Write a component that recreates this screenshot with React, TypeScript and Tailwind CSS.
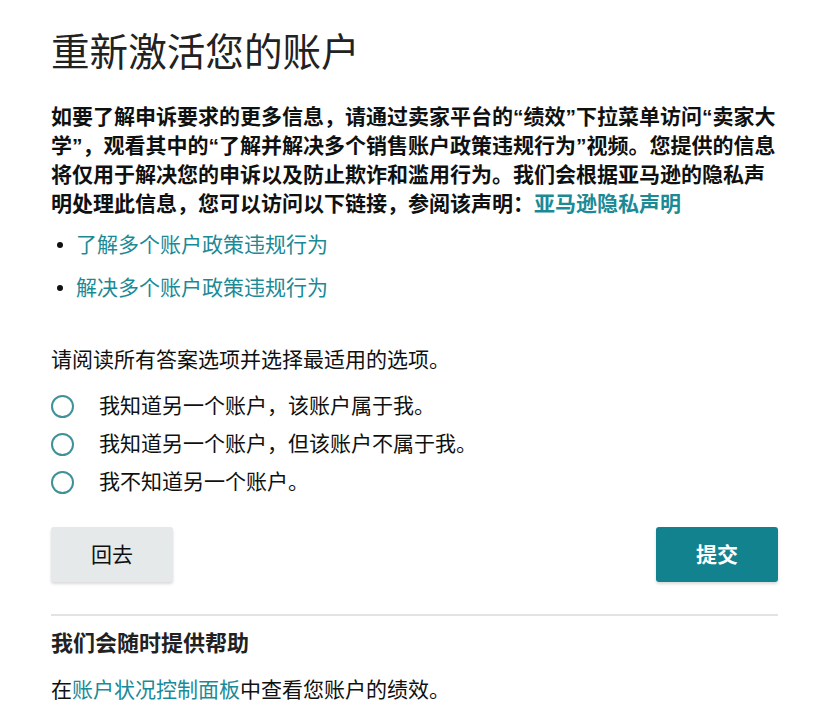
import React, { useState } from "react";

const options = [
  "我知道另一个账户，该账户属于我。",
  "我知道另一个账户，但该账户不属于我。",
  "我不知道另一个账户。",
];

export default function App() {
  const [picked, setPicked] = useState<number | null>(null);

  return (
    <div
      className="min-h-screen bg-white text-[#0f1111]"
      style={{ fontFamily: '"Liberation Sans", "Noto Sans CJK SC", sans-serif' }}
    >
      <div className="mx-[51px] w-[727px] pt-[27px]">
        <h1 className="text-[38.6px] font-normal leading-[52px] text-[#222]">
          重新激活您的账户
        </h1>

        <p className="mt-[23px] text-[21px] font-bold leading-[29px]">
          如要了解申诉要求的更多信息，请通过卖家平台的“绩效”下拉菜单访问“卖家大学”，观看其中的“了解并解决多个销售账户政策违规行为”视频。您提供的信息将仅用于解决您的申诉以及防止欺诈和滥用行为。我们会根据亚马逊的隐私声明处理此信息，您可以访问以下链接，参阅该声明：
          <a className="text-[#1b8a97]">亚马逊隐私声明</a>
        </p>

        <ul className="mt-[12px] flex flex-col gap-[14px] text-[21px] leading-[29px]">
          <li className="flex items-center">
            <span className="mr-[13px] ml-[6px] h-[6px] w-[6px] rounded-full bg-[#0f1111]" />
            <a className="text-[#1b8a97]">了解多个账户政策违规行为</a>
          </li>
          <li className="flex items-center">
            <span className="mr-[13px] ml-[6px] h-[6px] w-[6px] rounded-full bg-[#0f1111]" />
            <a className="text-[#1b8a97]">解决多个账户政策违规行为</a>
          </li>
        </ul>

        <p className="mt-[43px] text-[21px] leading-[29px]">
          请阅读所有答案选项并选择最适用的选项。
        </p>

        <div className="mt-[17px] flex flex-col gap-[8px]">
          {options.map((o, i) => (
            <label
              key={o}
              className="flex h-[30px] cursor-pointer items-center text-[21px]"
              onClick={() => setPicked(i)}
            >
              <span className="flex h-[23px] w-[23px] items-center justify-center rounded-full border-2 border-[#3f9199]">
                {picked === i ? (
                  <span className="h-[11px] w-[11px] rounded-full bg-[#3f9199]" />
                ) : null}
              </span>
              <span className="ml-[25px]">{o}</span>
            </label>
          ))}
        </div>

        <div className="mt-[30px] flex justify-between">
          <button className="h-[55px] w-[122px] rounded-[3px] bg-[#e6e9ea] text-[21px] text-[#0f1111] shadow-[0_2px_3px_rgba(0,0,0,0.15)]">
            回去
          </button>
          <button className="h-[55px] w-[122px] rounded-[3px] bg-[#12828f] text-[21px] font-bold text-white shadow-[0_2px_3px_rgba(0,0,0,0.15)]">
            提交
          </button>
        </div>

        <div className="mt-[32px] h-[2px] bg-[#e3e3e3]" />

        <h2 className="mt-[13px] text-[22px] font-bold leading-[29px] text-[#222]">
          我们会随时提供帮助
        </h2>
        <p className="mt-[17px] text-[21px] leading-[29px]">
          在<a className="text-[#1b8a97]">账户状况控制面板</a>中查看您账户的绩效。
        </p>
      </div>
    </div>
  );
}
